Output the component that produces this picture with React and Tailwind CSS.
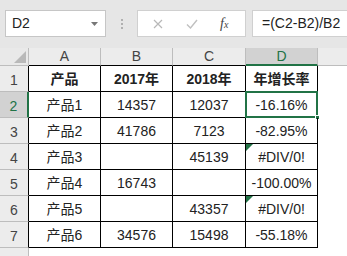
import React from "react";

const rows = [
  ["产品", "2017年", "2018年", "年增长率"],
  ["产品1", "14357", "12037", "-16.16%"],
  ["产品2", "41786", "7123", "-82.95%"],
  ["产品3", "", "45139", "#DIV/0!"],
  ["产品4", "16743", "", "-100.00%"],
  ["产品5", "", "43357", "#DIV/0!"],
  ["产品6", "34576", "15498", "-55.18%"],
];

const colWidths = ["w-[72px]", "w-[72px]", "w-[73px]", "w-[72px]"];

const Toolbar = () => (
  <div className="flex h-[48px] items-start bg-[#e6e6e6] pt-[10px]">
    {/* name box */}
    <div className="ml-[5px] flex h-[27px] w-[101px] items-center justify-between border border-[#c6c6c6] bg-white pl-[6px] pr-[7px]">
      <span className="text-[14px] text-[#222]">D2</span>
      <svg width="7" height="4" viewBox="0 0 7 4">
        <path d="M0 0h7L3.5 4z" fill="#777" />
      </svg>
    </div>
    <div className="flex h-[27px] w-[31px] flex-col items-center justify-center gap-[2px]">
      <span className="h-[2px] w-[2px] bg-[#b0b0b0]" />
      <span className="h-[2px] w-[2px] bg-[#b0b0b0]" />
      <span className="h-[2px] w-[2px] bg-[#b0b0b0]" />
    </div>
    {/* cancel / enter / fx */}
    <div className="flex h-[27px] w-[109px] items-center border border-[#d0d0d0] bg-white">
      <svg className="ml-[15px]" width="10" height="10" viewBox="0 0 10 10">
        <path d="M1 1l8 8M9 1l-8 8" stroke="#b8b8b8" strokeWidth="1.2" />
      </svg>
      <svg className="ml-[23px]" width="12" height="10" viewBox="0 0 12 10">
        <path d="M1 5.5l3.5 3.5L11 1" stroke="#c0c0c0" strokeWidth="1.4" fill="none" />
      </svg>
      <span className="ml-[22px] font-['Liberation_Serif',serif] text-[14px] italic text-[#444]">
        f<span className="text-[10px]">x</span>
      </span>
    </div>
    <div className="ml-[6px] flex h-[27px] flex-1 items-center border border-r-0 border-[#d0d0d0] bg-white pl-[9px]">
      <span className="text-[14px] text-[#222]">=(C2-B2)/B2</span>
    </div>
  </div>
);

const HeaderRow = () => (
  <div className="flex h-[18px]">
    <div className="relative w-[29px] border-r border-b border-[#bdbdbd] bg-[#e9e9e9]">
      <svg className="absolute right-[2px] bottom-[2px]" width="12" height="12" viewBox="0 0 12 12">
        <path d="M12 0v12H0z" fill="#b9b9b9" />
      </svg>
    </div>
    {["A", "B", "C", "D"].map((c, i) => (
      <div
        key={c}
        className={`${colWidths[i]} flex items-center justify-center text-[14px] ${
          c === "D"
            ? "border-r border-b-2 border-r-[#bdbdbd] border-b-[#217346] bg-[#d2d2d2] text-[#217346]"
            : "border-r border-b border-r-[#bdbdbd] border-b-black bg-[#ececec] text-[#444]"
        }`}
      >
        {c}
      </div>
    ))}
    <div className="flex-1 border-b border-[#bdbdbd] bg-[#ececec]" />
  </div>
);

const Cell = ({ value, col, row }) => {
  const bold = row === 0;
  const selected = row === 1 && col === 3;
  const error = col === 3 && (row === 3 || row === 5);
  return (
    <div
      className={`${colWidths[col]} relative flex items-center justify-center border-r border-b border-black pt-[2px] text-[14px] text-[#222] ${
        bold ? "font-bold" : ""
      }`}
    >
      {value}
      {selected && (
        <div className="absolute -top-[1px] -left-[1px] h-[27px] w-[73px] border-2 border-[#217346]">
          <div className="absolute -right-[4px] -bottom-[4px] h-[5px] w-[5px] border border-white bg-[#217346]" />
        </div>
      )}
      {error && (
        <svg className="absolute top-0 left-0" width="7" height="7" viewBox="0 0 7 7">
          <path d="M0 0h7L0 7z" fill="#217346" />
        </svg>
      )}
    </div>
  );
};

export default function App() {
  return (
    <div className="h-[256px] w-[347px] overflow-hidden bg-white font-['Liberation_Sans','Noto_Sans_CJK_SC',sans-serif]">
      <Toolbar />
      <HeaderRow />
      {rows.map((r, ri) => (
        <div key={ri} className="flex h-[26px]">
          <div
            className={`flex w-[29px] items-center justify-center pt-[3px] text-[14px] ${
              ri === 1
                ? "border-r-2 border-b border-r-[#217346] border-b-[#bdbdbd] bg-[#d2d2d2] text-[#217346]"
                : "border-r border-b border-r-black border-b-[#bdbdbd] bg-[#ececec] text-[#444]"
            }`}
          >
            {ri + 1}
          </div>
          {r.map((v, ci) => (
            <Cell key={ci} value={v} col={ci} row={ri} />
          ))}
          <div className="flex-1" />
        </div>
      ))}
      <div className="flex h-[20px]">
        <div className="w-[29px] border-r border-[#bdbdbd] bg-[#ececec]" />
        <div className="flex-1" />
      </div>
    </div>
  );
}
